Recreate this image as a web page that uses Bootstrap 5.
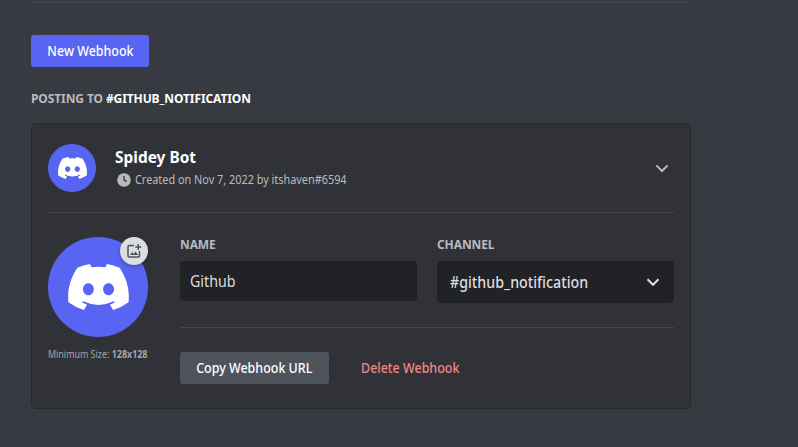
<!DOCTYPE html>
<html lang="en">
<head>
<meta charset="utf-8">
<meta name="viewport" content="width=device-width, initial-scale=1">
<title>Webhooks</title>
<link rel="stylesheet" href="https://cdn.jsdelivr.net/npm/bootstrap@5.3.0/dist/css/bootstrap.min.css">
<style>
body{background:#373a41;color:#dcddde;font-family:"Noto Sans","Open Sans",sans-serif;overflow:hidden;height:447px}
.pane{width:660px;margin-left:31px;padding-top:2px}
.rule{height:1px;background:#43464c}
/* condensed lettering */
.slim{display:inline-block;transform:scaleX(.89);transform-origin:0 50%;white-space:nowrap}
.wh-btn .slim{transform-origin:50% 50%}
.bot .slim{transform:scaleX(.965)}
.made .slim{transform:scaleX(.906)}
.wh-btn{height:32px;border:0;border-radius:3px;padding:0;color:#fff;font-size:14px;line-height:32px;font-weight:500;display:flex;align-items:center;justify-content:center;white-space:nowrap}
.wh-btn:hover{color:#fff}
.btn-new{width:118px;background:#5865f2;margin-top:32px}
.btn-copy{width:149px;background:#4f545c}
.btn-del,.btn-del:hover{width:98px;color:#f38688;margin-left:32px}
.heading{font-size:12px;line-height:16px;font-weight:700;color:#b9bbbe;text-transform:uppercase;white-space:nowrap;letter-spacing:-.1px}
.posting{margin-top:24px}
.hook{margin-top:16px;height:286px;background:#313237;border:1px solid #27282c;border-radius:5px;padding:0 16px}
.hook-head{height:88px}
.face{background:#5865f2;flex:none;position:relative}
.face-sm{width:48px;height:48px}
.face-lg{width:100px;height:100px}
.who{padding-left:19px}
.bot{font-size:16px;line-height:20px;font-weight:700;color:#fff;margin-top:-1px}
.made{font-size:12px;line-height:16px;color:#b9bbbe;margin-top:5px;padding-left:2px}
.upload{position:absolute;right:0;top:0;width:28px;height:28px;background:#dcddde;box-shadow:0 2px 4px rgba(0,0,0,.25)}
.minimum{font-size:10px;line-height:14px;color:#a3a6aa;margin-top:10px;white-space:nowrap}
.side{width:100px;flex:none}
.field{background:#212226;border-radius:3px;font-size:16px;color:#dcddde;margin-top:8px}
.field-name{height:40px;padding-left:10px}
.field-chan{height:42px;padding:0 12px 0 13px;border-radius:4px;font-weight:500}
.two{display:grid;grid-template-columns:1fr 1fr;column-gap:20px}
</style>
<script src="https://cdn.jsdelivr.net/npm/bootstrap@5.3.0/dist/js/bootstrap.bundle.min.js"></script>
</head>
<body>
<svg class="d-none"><symbol id="clyde" viewBox="0 0 127.14 96.36"><path fill="#fff" d="M107.7,8.07A105.15,105.15,0,0,0,81.47,0a72.06,72.06,0,0,0-3.36,6.83A97.68,97.68,0,0,0,49,6.83,72.37,72.37,0,0,0,45.64,0,105.89,105.89,0,0,0,19.39,8.09C2.79,32.65-1.71,56.6.54,80.21h0A105.73,105.73,0,0,0,32.71,96.36,77.7,77.7,0,0,0,39.6,85.25a68.42,68.42,0,0,1-10.85-5.18c.91-.66,1.8-1.34,2.66-2a75.57,75.57,0,0,0,64.32,0c.87.71,1.76,1.39,2.66,2a68.68,68.68,0,0,1-10.87,5.19,77,77,0,0,0,6.89,11.1A105.25,105.25,0,0,0,126.6,80.22h0C129.24,52.84,122.09,29.11,107.7,8.07ZM42.45,65.69C36.18,65.69,31,60,31,53s5-12.74,11.43-12.74S54,46,53.89,53,48.84,65.69,42.45,65.69Zm42.24,0C78.41,65.69,73.25,60,73.25,53s5-12.74,11.44-12.74S96.23,46,96.12,53,91.04,65.69,84.69,65.69Z"/></symbol></svg>
<main class="pane">
  <div class="rule"></div>
  <button class="btn wh-btn btn-new"><span class="slim">New Webhook</span></button>
  <div class="heading posting">Posting to <span class="text-white">#github_notification</span></div>
  <section class="hook">
    <header class="hook-head d-flex align-items-center">
      <div class="face face-sm rounded-circle d-flex align-items-center justify-content-center"><svg width="29" height="22"><use href="#clyde"/></svg></div>
      <div class="who flex-grow-1">
        <div class="bot"><span class="slim">Spidey Bot</span></div>
        <div class="made d-flex align-items-center"><svg width="14" height="14" viewBox="0 0 14 14" class="me-1"><circle cx="7" cy="7" r="6.8" fill="#b9bbbe"/><path d="M7 3v4l2.800 1.400" fill="none" stroke="#313237" stroke-width="1.300"/></svg><span class="slim">Created on Nov 7, 2022 by itshaven#6594</span></div>
      </div>
      <svg width="24" height="24" viewBox="0 0 24 24" fill="none" stroke="#b9bbbe" stroke-width="2"><path d="M6.4 9.4 12 15l5.600-5.600"/></svg>
    </header>
    <div class="rule"></div>
    <div class="d-flex pt-4">
      <div class="side">
        <div class="face face-lg rounded-circle d-flex align-items-center justify-content-center"><svg width="61" height="46"><use href="#clyde"/></svg>
          <span class="upload rounded-circle d-flex align-items-center justify-content-center"><svg width="16" height="16" viewBox="0 0 16 16"><path d="M8 2.500H3.200Q2 2.500 2 3.700v9.100Q2 14 3.200 14h9.100q1.200 0 1.200-1.200V8" fill="none" stroke="#4f545c" stroke-width="1.500"/><path d="M4 12l2.200-3 1.600 1.900L9.500 8.500 12 12ZM11.500 1h1.500v2.200h2.200v1.500H13v2.200h-1.500V4.700H9.300V3.200h2.200Z" fill="#4f545c"/></svg></span>
        </div>
        <div class="minimum"><span class="slim">Minimum Size: <b>128x128</b></span></div>
      </div>
      <div class="flex-grow-1 ms-4 ps-2">
        <div class="two">
          <div><div class="heading">Name</div><div class="field field-name d-flex align-items-center"><span class="slim">Github</span></div></div>
          <div><div class="heading">Channel</div><div class="field field-chan d-flex align-items-center justify-content-between"><span class="slim">#github_notification</span><svg width="18" height="18" viewBox="0 0 18 18" fill="none" stroke="#dcddde" stroke-width="2"><path d="M3.500 6.300 9 11.800l5.500-5.500"/></svg></div></div>
        </div>
        <div class="rule mt-4"></div>
        <div class="d-flex mt-4"><button class="btn wh-btn btn-copy"><span class="slim">Copy Webhook URL</span></button><button class="btn wh-btn btn-del"><span class="slim">Delete Webhook</span></button></div>
      </div>
    </div>
  </section>
</main>
</body>
</html>
